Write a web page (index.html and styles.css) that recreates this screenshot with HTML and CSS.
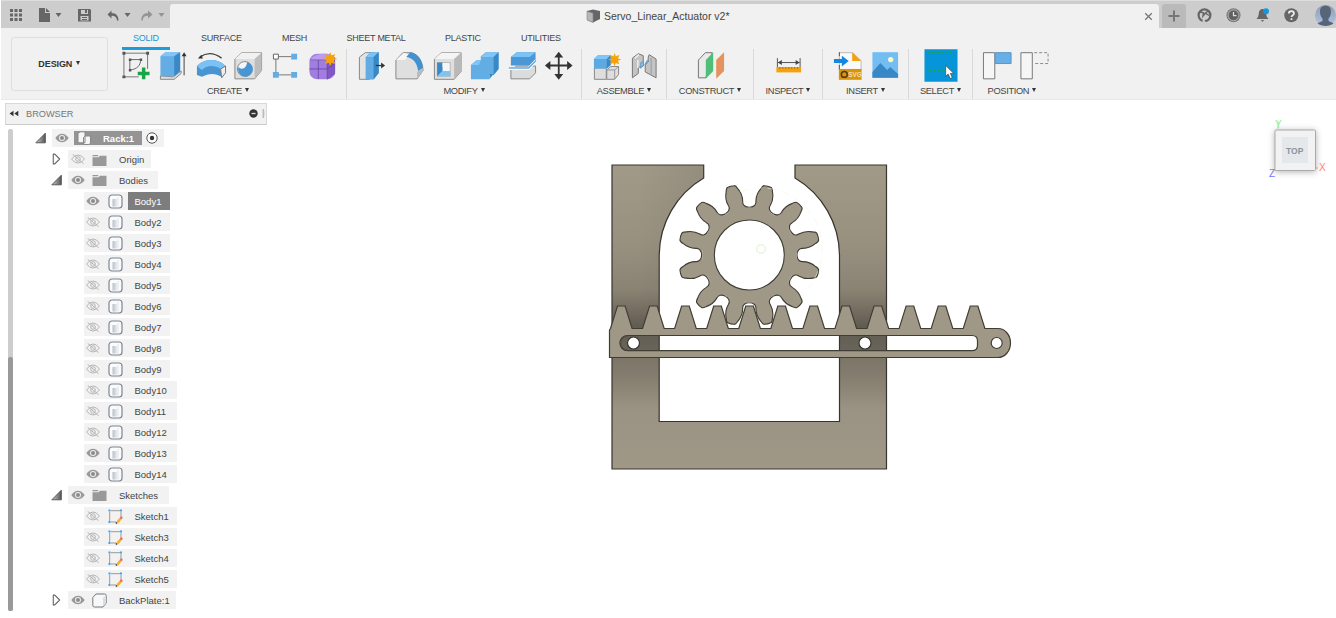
FILE: index.html
```html
<!DOCTYPE html>
<html lang="en">
<head>
<meta charset="utf-8">
<title>Servo_Linear_Actuator v2*</title>
<link rel="stylesheet" href="styles.css">
</head>
<body>
<svg class="defs" width="0" height="0" aria-hidden="true">
  <defs>
    <linearGradient id="g-col" x1="0" y1="165" x2="0" y2="469" gradientUnits="userSpaceOnUse">
      <stop offset="0" stop-color="#a19a89"/><stop offset=".25" stop-color="#999180"/><stop offset=".41" stop-color="#8a8374"/>
      <stop offset=".48" stop-color="#736d60"/><stop offset=".53" stop-color="#615c51"/><stop offset=".615" stop-color="#6a655a"/>
      <stop offset=".635" stop-color="#7b7568"/><stop offset=".72" stop-color="#898172"/><stop offset=".8" stop-color="#9a9282"/><stop offset="1" stop-color="#a09887"/>
    </linearGradient>
    <linearGradient id="g-shade"><stop offset="0" stop-color="#4a463c" stop-opacity="0"/><stop offset="1" stop-color="#4a463c" stop-opacity=".28"/></linearGradient>
    <linearGradient id="g-tri"><stop offset="0" stop-color="#ccc"/><stop offset="1" stop-color="#555"/></linearGradient>
    <linearGradient id="g-body"><stop offset="0" stop-color="#b9bfc8"/><stop offset="1" stop-color="#eef0f4"/></linearGradient>
    <linearGradient id="g-avatar" x1="0" y1="0" x2="0" y2="1"><stop offset="0" stop-color="#8b9cb5"/><stop offset="1" stop-color="#b1c5e2"/></linearGradient>
    <symbol id="eye" viewBox="0 0 14 10"><path d="M.3 5Q3.3.7 7 .7T13.7 5Q10.7 9.3 7 9.3T.3 5z" fill="#999"/><circle cx="7" cy="5" r="3" fill="#eee"/><circle cx="7" cy="5" r="2" fill="#8b8b8b"/></symbol>
    <symbol id="eye-off" viewBox="0 0 14 10"><path d="M.6 5Q3.3 1 7 1t6.4 4Q10.7 9 7 9T.6 5zM1.6.3l11 9.4" fill="none" stroke="#b5b5b5"/><circle cx="7" cy="5" r="2.3" fill="none" stroke="#b5b5b5"/></symbol>
    <symbol id="folder" viewBox="0 0 15 12"><path d="M.5.6h5.700v1.200H.5zM.5 2.700h6L8 1.300h6.500V11.500H.5z" fill="#999"/></symbol>
    <symbol id="body" viewBox="0 0 15 15"><rect x="1" y="1" width="13" height="13" rx="3" fill="#fafbfc" stroke="#7f8590" stroke-width="1.200"/><path d="M4.500 5h5v7.500h-5z" fill="url(#g-body)"/><path d="M10 3v9.500" stroke="#e2e4e8"/></symbol>
    <symbol id="sketch" viewBox="0 0 15 15"><path d="M1.700 3v9M3 1.700h9M13 3v5M3 13h5" fill="none" stroke="#999"/><path d="M.5.5h2v2h-2zM12 .5h2v2h-2zM.5 12h2v2h-2z" fill="#3fa0e8"/><path d="M9.300 13.300l3.500-4" stroke="#f8b02c" stroke-width="2.600"/><circle cx="13.300" cy="8.700" r="1.300" fill="#f2655b"/><circle cx="8.500" cy="14" r=".9" fill="#555"/></symbol>
    <symbol id="open" viewBox="0 0 11 11"><path d="M.8 10.300L10.300.7v9.600z" fill="url(#g-tri)" stroke="#4f4f4f" stroke-width=".9"/></symbol>
    <symbol id="shut" viewBox="0 0 11 13"><path d="M2 1.200h1.700L8.900 6.500 3.700 11.800H2z" fill="#fafafa" stroke="#666" stroke-width="1.200" stroke-linejoin="round"/></symbol>
    <symbol id="star" viewBox="-7 -7 14 14"><path d="M0-6.700L1.200-3.400 4.700-4.700 3.400-1.200 6.700 0 3.400 1.200 4.700 4.700 1.200 3.400 0 6.700-1.200 3.400-4.700 4.700-3.400 1.200-6.700 0-3.400-1.200-4.700-4.700-1.200-3.400z" fill="#f6a30b"/></symbol>
    <path id="tooth" d="M-12.35-46.070C-8.500-47.100-6.200-50.100-7.430-53.200-8.650-57.700-8.200-62.600-6-67-5.300-69.500-4.700-70.800-3.200-70.900Q0-71.500 3.200-70.900C4.700-70.800 5.300-69.500 6-67 8.200-62.600 8.650-57.700 7.430-53.200 6.200-50.100 8.500-47.100 12.350-46.070"/>
  </defs>
</svg>

<header class="titlebar">
  <div class="quick">
    <svg width="170" height="25" viewBox="0 3 170 25" fill="#666">
      <path d="M9 8h3v3H9zM13.500 8h3v3h-3zM18 8h3v3h-3zM9 12.500h3v3H9zM13.500 12.500h3v3h-3zM18 12.500h3v3h-3zM9 17h3v3H9zM13.500 17h3v3h-3zM18 17h3v3h-3z"/>
      <path d="M38 7h6v5h5v9H38zM45 7l4 4h-4z"/><path d="M54.500 12h6l-3 4z"/>
      <path fill-rule="evenodd" d="M77 8h12l1 1v11.500H77zM80 9v4h7V9zM79.500 15v4.500h8V15z"/><path d="M84 9h2v3h-2zM81 16h5v1h-5zM81 18h5v1h-5z"/>
      <path d="M110.500 9.500l-4 4 4 4v-2.700c3 0 5 .8 5.500 4.700h1.500c0-5-2.500-7.200-7-7.400z"/><path d="M123.500 12h6l-3 4z"/>
      <g opacity=".55"><path d="M147 9.500l4.500 4-4.500 4v-2.700c-3 0-4.800.8-5.300 4.700h-1.400c0-5 2.400-7.200 6.700-7.400z"/><path d="M157.500 12h6l-3 4z"/></g>
    </svg>
  </div>
  <div class="doc-tab">
    <svg width="15" height="14" viewBox="0 0 15 14"><path d="M7 .5L14 2v8l-7 3.500L1 11V2z" fill="#666"/><path d="M1 2.500l6 1.700v9L1 11z" fill="#b6b6b6"/><path d="M1 2l6 2.200v9.300L1 11z" fill="none" stroke="#888" stroke-width=".6"/></svg>
    <span>Servo_Linear_Actuator v2*</span>
    <svg class="close" width="9" height="9" viewBox="0 0 9 9"><path d="M1.200 1.200l6.600 6.600m0-6.600L1.200 7.800" stroke="#777" stroke-width="1.300"/></svg>
  </div>
  <div class="session">
    <span class="add"><svg width="12" height="12" viewBox="0 0 12 12"><path d="M6 .5v11M.5 6h11" stroke="#777" stroke-width="2"/></svg></span>
    <svg width="150" height="25" viewBox="1186 3 150 25">
      <circle cx="1204.500" cy="14.300" r="5.900" fill="none" stroke="#666" stroke-width="2.200"/><path d="M1199.500 10.500l4 1.500-.5 3 3-3.500 3-2M1206 12.500l3 2" stroke="#666" stroke-width="1.500" fill="none"/><path d="M1202 21.500l1.500-4 2.500 4z" fill="#cdcdcd"/>
      <circle cx="1233.500" cy="14.300" r="7" fill="#777"/><circle cx="1233.500" cy="14.300" r="5.500" fill="none" stroke="#bbb" stroke-width=".8"/><circle cx="1233.500" cy="14.300" r="4.500" fill="#606060"/><path d="M1233.500 11v3.700h3" fill="none" stroke="#ddd" stroke-width="1.300"/>
      <path d="M1256.500 18c2-2 2-3.500 2.300-6 .3-2.700 1.700-4 3.700-4s3.500 1.500 3.700 4c.2 2.500.3 4 2.300 6z" fill="#666"/><path d="M1261 19h3l-1.500 2z" fill="#666"/><circle cx="1266" cy="10.300" r="3" fill="#1398e0"/>
      <circle cx="1291.300" cy="14.300" r="7" fill="#666"/><path d="M1288.800 12.500c0-3.300 5.200-3.300 5.200 0 0 1.700-2.500 1.700-2.500 3.500m0 1.200v1.700" fill="none" stroke="#eee" stroke-width="1.700"/>
      <circle cx="1325.500" cy="14.500" r="10.500" fill="url(#g-avatar)"/><path d="M1320 10c0-7 11-7 11 0 0 4-1 6-2.500 7.500v2.500l5 2.300c-4 3.600-12 3.600-16 0l5-2.300v-2.500C1321 16 1320 14 1320 10z" fill="#566578"/>
    </svg>
  </div>
</header>

<section class="ribbon">
  <button class="workspace">DESIGN <i class="caret"></i></button>
  <div class="ribbon-main">
    <nav class="tabs"><a class="active t-solid">SOLID</a><a class="t-surface">SURFACE</a><a class="t-mesh">MESH</a><a class="t-sheet">SHEET METAL</a><a class="t-plastic">PLASTIC</a><a class="t-util">UTILITIES</a></nav>
    <div class="groups">
      <div class="group create">
        <div class="tools">
          <svg viewBox="116 48 38 36"><path d="M123 54v22M124 53h22M147 54v15M124 77h14" fill="none" stroke="#777" stroke-width="1"/><path d="M121.500 51.500h3v3h-3zM145.500 51.500h3v3h-3zM121.500 75.500h3v3h-3z" fill="#555"/><path d="M129 59.500h11c0 6-4 10-11 10.500z" fill="none" stroke="#666"/><path d="M128 58.500h2.500V61H128zM139 58.500h2.500V61H139zM128 69h2.500v2.500H128z" fill="#555"/><path d="M143 67.500v12M137 73.500h12" stroke="#18a548" stroke-width="3.500"/></svg>
          <svg viewBox="153.500 48 38 36"><path d="M160 76l13 1 8-6v2.500l-7 6h-14z" fill="#ddd" stroke="#888"/><path d="M160 56l5-4h15v19l-6 5.500h-14z" fill="#63ade5"/><path d="M160 56l5-4h15l-6 4z" fill="#81c4f6"/><path d="M174 56l6-4v19l-6 5.500z" fill="#3989c7"/><path d="M184 54.500v21" stroke="#444"/><path d="M181.500 56l2.500-4 2.500 4z" fill="#333"/></svg>
          <svg viewBox="191 48 38 36"><path d="M199 57c7-5 15-4 22 1" fill="none" stroke="#444" stroke-width="1.300"/><path d="M197 58.500l3.500-4 1.500 4z" fill="#333"/><path d="M196 66c8-8 21-8 29 0l-4 11c-6-4-13-4-20 0l-5-2z" fill="#4995d4"/><path d="M196 66c8-8 21-8 29 0l-5 3c-6-4-14-4-19 1z" fill="#7ac2f4"/><path d="M220 69l5-3v7l-4 5z" fill="#eee" stroke="#777"/></svg>
          <svg viewBox="228.500 48 38 36"><path d="M234.500 59l7-6.500h20v18l-7 8.500h-20z" fill="#dedede" stroke="#888"/><path d="M234.500 59l7-6.500h20l-7 6.500z" fill="#f1f1f1"/><path d="M254.500 59l7-6.500v18l-7 8.500z" fill="#bdbdbd"/><circle cx="244.500" cy="69" r="7.500" fill="#f5f5f5" stroke="#888"/><path d="M247 62a7.500 7.500 0 1 1-9 5c4 4 8 1 9-5z" fill="#4895d4"/></svg>
          <svg viewBox="266 48 38 36"><path d="M275 58v14M277 56.500h14M277 75h14" stroke="#777" fill="none"/><path d="M272.500 54h5v5h-5z" fill="#fff" stroke="#666"/><path d="M290.500 53.500h6v6h-6zM290.500 72h6v6h-6zM272 72h6v6h-6z" fill="#63ade5"/></svg>
          <svg viewBox="303.500 48 38 36"><rect x="309" y="53.500" width="26" height="26" rx="8" fill="#a07dde"/><path d="M311 58c5-5 15-6 22-2l-6 5h-17z" fill="#bd9cf0"/><path d="M327 61l8-4v17l-8 6z" fill="#8058c2"/><path d="M309 69h17l9-5M318 60v19M327 59v20M310 60h17l6-4" fill="none" stroke="#6948a8" stroke-width=".9"/><use href="#star" x="322.500" y="51.500" width="15" height="15"/></svg>
        </div>
        <div class="label">CREATE <i class="caret"></i></div>
      </div>
      <div class="group modify">
        <div class="tools">
          <svg viewBox="351 48 38 36"><path d="M357.500 57l6-4.500h8l-4 27h-10z" fill="#e3e3e3" stroke="#888"/><path d="M364 57l5-5h8v21l-5 6.500h-8z" fill="#4291d0"/><path d="M364 57l5-5h8l-5 5z" fill="#7bc3f5"/><path d="M364 57h8v22.500h-8z" fill="#62ace3"/><path d="M372 57l5-5v21l-5 6.500z" fill="#3988c6"/><path d="M374 65.500h6" stroke="#333" stroke-width="1.300"/><path d="M379.500 62.500l4 3-4 3z" fill="#333"/></svg>
          <svg viewBox="388.500 48 38 36"><path d="M394.500 60l7-7.500h7c7 0 13 7 13.500 18l-6 8.500h-21.500z" fill="#dfdfdf" stroke="#888"/><path d="M394.500 60l8-7.500 6 2-5 5.500z" fill="#f6f6f6"/><path d="M405 57l4-5c7 1 12 7 13 16l-5 3c-1-8-5-13-12-14z" fill="#4291d0"/><path d="M416 72l6-4v3l-6 8z" fill="#bbb"/></svg>
          <svg viewBox="426 48 38 36"><path d="M432.500 59l7-6.500h20v19l-7 8h-20z" fill="#dfdfdf" stroke="#888"/><path d="M432.500 59l7-6.500h20l-7 6.500z" fill="#f4f4f4"/><path d="M452.500 59l7-6.500v19l-7 8z" fill="#b9b9b9"/><path d="M435.500 62.500h13v14h-13z" fill="#f6f6f6" stroke="#999" stroke-width=".6"/><path d="M435.500 62.500l5 5V71l-5 5.500z" fill="#3989c8"/><path d="M435.500 62.500h5V71l-5 5.500z" fill="#3989c8"/><path d="M435.500 76.500l5-5.500h8v5.500z" fill="#7cc4f5"/></svg>
          <svg viewBox="463.500 48 38 36"><path d="M469.500 65l6-5h4v-4l5-4h13v17l-5 6h-4v4.500h-19z" fill="#63ade5"/><path d="M469.500 65l6-5h4l-2 5zM479.500 57l5-5h13l-5 5z" fill="#81c4f6"/><path d="M492.500 57l5-5v17l-5 6zM488.500 74h4l-4 5z" fill="#3989c7"/></svg>
          <svg viewBox="501 48 38 36"><path d="M509 70l6-4h19v7l-6 6h-19z" fill="#dcdcdc" stroke="#888"/><path d="M509 57l6-5h19v8l-6 5.500h-19z" fill="#4a98d7"/><path d="M509 57l6-5h19l-6 5z" fill="#7bc3f5"/><path d="M507 68.500h20l7.500-8" stroke="#fff" stroke-width="3" fill="none"/><path d="M507 68h20l7.500-7.500" stroke="#62ace3" stroke-width="1.500" fill="none"/></svg>
          <svg viewBox="539.500 48 38 36"><path d="M558.500 55v21M548 65.500h21" stroke="#333" stroke-width="1.800"/><path d="M554 57.500l4.500-6 4.500 6zM554 74l4.500 6 4.500-6zM550 61l-5.500 4.500 5.500 4.500zM567 61l5.500 4.500L567 70z" fill="#333"/></svg>
        </div>
        <div class="label">MODIFY <i class="caret"></i></div>
      </div>
      <div class="group assemble">
        <div class="tools">
          <svg viewBox="586 48 38 36"><path d="M592.500 68h12v11.500h-12zM605 70l4-3.500h8v8l-4 5h-8z" fill="#dedede" stroke="#888"/><path d="M605 70h8v9M613 70l4-3.500" stroke="#999" fill="none"/><path d="M592 59l4-4h13v10l-4 3.500h-13z" fill="#5da9e2"/><path d="M592 59l4-4h13l-4 4z" fill="#82c5f7"/><path d="M605 59l4-4v10l-4 3.500z" fill="#3a89c7"/><use href="#star" x="606" y="52.500" width="14" height="14"/></svg>
          <svg viewBox="624 48 38 36"><path d="M631.500 78V58l6-4.500 5 2V66l-3 1.500-2-1v7z" fill="#c4c4c4" stroke="#777"/><path d="M634 58l4-3.500M637 60v8" stroke="#eee" stroke-width="1.500"/><path d="M655.500 78V59l-7-4.500-1 2.500v5l-3 3v7z" fill="#c4c4c4" stroke="#777"/><path d="M640 68.500v-5l2-2M644 65l3-5" stroke="#4aa0e4" fill="none" stroke-width="1.200"/><path d="M650.500 58v16" stroke="#999"/></svg>
        </div>
        <div class="label">ASSEMBLE <i class="caret"></i></div>
      </div>
      <div class="group construct">
        <div class="tools"><svg viewBox="691 48 38 36"><path d="M697.500 60l7-7.500h7L705 78h-7.500z" fill="#eaeaea" stroke="#777"/><path d="M705 60l7.500-8v19l-7.500 8z" fill="#4fbe78"/><path d="M715.500 60l8-8v19l-8 8z" fill="#e3935f"/></svg></div>
        <div class="label">CONSTRUCT <i class="caret"></i></div>
      </div>
      <div class="group inspect">
        <div class="tools"><svg viewBox="769 48 38 36"><path d="M776.500 58v9M799.500 58v9M777 62.500h22" stroke="#555"/><path d="M777 62.500l4-2.500v5zM799 62.500l-4-2.500v5z" fill="#444"/><path d="M775.500 67h25v5.500h-25z" fill="#f4a20c"/><path d="M779 67v2m3-2v2m3-2v2m3-2v2m3-2v2m3-2v2m3-2v2" stroke="#a96c00" stroke-width=".8"/></svg></div>
        <div class="label">INSPECT <i class="caret"></i></div>
      </div>
      <div class="group insert">
        <div class="tools">
          <svg viewBox="828 48 38 36"><path d="M838.500 52.500H852l8.500 8V70h-22z" fill="#fafafa" stroke="#bbb"/><path d="M838.500 52v4m0 9v5" stroke="#555"/><path d="M851.500 52l9 9h-9z" fill="#f4a20c"/><path d="M838 69h23v11h-23z" fill="#d9940e"/><circle cx="843.500" cy="74.500" r="3" fill="none" stroke="#4b390f" stroke-width="1.500"/><text x="847.500" y="77.500" class="svg-word">SVG</text><path d="M833 59h8v-3.500l7 5.500-7 5.500V63h-8z" fill="#1487e0"/></svg>
          <svg viewBox="865.500 48 38 36"><path d="M871 52h26v26h-26z" fill="#73bdf2"/><path d="M871 72l8-9 7 7 3-3 8 7v4h-26z" fill="#3988c6"/><circle cx="889.500" cy="59.500" r="2.700" fill="#f8f9c8"/></svg>
        </div>
        <div class="label">INSERT <i class="caret"></i></div>
      </div>
      <div class="group select">
        <div class="tools"><svg viewBox="921 48 38 36"><path d="M923.500 49h33.500v33h-33.500z" fill="#0795da"/><path d="M926.500 52.500h24.500v18h-24.500z" fill="none" stroke="#1aa552" stroke-dasharray="3 1.500"/><path d="M945 65.500v11l2.500-2.300 2.200 4.500 2-1-2-4.200h3.500z" fill="#fff" stroke="#444" stroke-width=".7"/></svg></div>
        <div class="label">SELECT <i class="caret"></i></div>
      </div>
      <div class="group position">
        <div class="tools">
          <svg viewBox="978 48 38 36"><path d="M982.500 52.500h11.500v26.500h-11.500z" fill="#f6f6f6" stroke="#777"/><path d="M994.500 52.500h16v11h-16z" fill="#68afe7" stroke="#5596ca"/></svg>
          <svg viewBox="1015.500 48 38 36"><path d="M1020.500 52.500h11.500v26.500h-11.500z" fill="#f6f6f6" stroke="#777"/><path d="M1034 52.500h14v11h-14" fill="none" stroke="#888" stroke-dasharray="3 2"/></svg>
        </div>
        <div class="label">POSITION <i class="caret"></i></div>
      </div>
    </div>
  </div>
</section>

<main class="workarea">
  <aside class="browser">
    <div class="browser-head">
      <svg width="10" height="7" viewBox="0 0 10 7"><path d="M4.500.8v5.400L.5 3.500zM9.300.8v5.400l-4-2.700z" fill="#333"/></svg>
      <span>BROWSER</span>
      <svg class="end" width="16" height="11" viewBox="0 0 16 11"><circle cx="4.500" cy="5.500" r="4.200" fill="#333"/><path d="M2.500 5.500h4" stroke="#ddd" stroke-width="1.300"/><path d="M14.300 1v9" stroke="#bbb" stroke-width="1.500"/><path d="M15.500 3v5" stroke="#ddd"/></svg>
    </div>
    <div class="browser-body">
      <div class="scroll"><div class="thumb"></div></div>
      <div class="tree">
        <div class="row l0"><svg class="tw"><use href="#open"/></svg><div class="pill w112"><svg class="eye"><use href="#eye"/></svg><div class="rack"><svg width="17" height="14" viewBox="0 0 17 14"><path d="M2 2.500l2-1.700h5v11H2zM7.500 6.500l2-1.500h5v7l-1.500 1.500H7.500z" fill="#f4f5f7" stroke="#888"/></svg><b>Rack:1</b></div><svg class="radio" viewBox="0 0 12 12"><circle cx="6" cy="6" r="5.200" fill="#fff" stroke="#555"/><circle cx="6" cy="6" r="2.200" fill="#333"/></svg></div></div>
        <div class="row l1"><svg class="tw"><use href="#shut"/></svg><div class="pill w83"><svg class="eye"><use href="#eye-off"/></svg><svg class="ic"><use href="#folder" y="1"/></svg><span>Origin</span></div></div>
        <div class="row l1"><svg class="tw"><use href="#open"/></svg><div class="pill w90"><svg class="eye"><use href="#eye"/></svg><svg class="ic"><use href="#folder"/></svg><span>Bodies</span></div></div>
        <div class="row l2"><div class="pill w87"><svg class="eye"><use href="#eye"/></svg><svg class="ic"><use href="#body"/></svg><span class="picked">Body1</span></div></div>
        <div class="row l2"><div class="pill w87"><svg class="eye"><use href="#eye-off"/></svg><svg class="ic"><use href="#body"/></svg><span>Body2</span></div></div>
        <div class="row l2"><div class="pill w87"><svg class="eye"><use href="#eye-off"/></svg><svg class="ic"><use href="#body"/></svg><span>Body3</span></div></div>
        <div class="row l2"><div class="pill w87"><svg class="eye"><use href="#eye-off"/></svg><svg class="ic"><use href="#body"/></svg><span>Body4</span></div></div>
        <div class="row l2"><div class="pill w87"><svg class="eye"><use href="#eye-off"/></svg><svg class="ic"><use href="#body"/></svg><span>Body5</span></div></div>
        <div class="row l2"><div class="pill w87"><svg class="eye"><use href="#eye-off"/></svg><svg class="ic"><use href="#body"/></svg><span>Body6</span></div></div>
        <div class="row l2"><div class="pill w87"><svg class="eye"><use href="#eye-off"/></svg><svg class="ic"><use href="#body"/></svg><span>Body7</span></div></div>
        <div class="row l2"><div class="pill w87"><svg class="eye"><use href="#eye-off"/></svg><svg class="ic"><use href="#body"/></svg><span>Body8</span></div></div>
        <div class="row l2"><div class="pill w87"><svg class="eye"><use href="#eye-off"/></svg><svg class="ic"><use href="#body"/></svg><span>Body9</span></div></div>
        <div class="row l2"><div class="pill w93"><svg class="eye"><use href="#eye-off"/></svg><svg class="ic"><use href="#body"/></svg><span>Body10</span></div></div>
        <div class="row l2"><div class="pill w93"><svg class="eye"><use href="#eye-off"/></svg><svg class="ic"><use href="#body"/></svg><span>Body11</span></div></div>
        <div class="row l2"><div class="pill w93"><svg class="eye"><use href="#eye-off"/></svg><svg class="ic"><use href="#body"/></svg><span>Body12</span></div></div>
        <div class="row l2"><div class="pill w93"><svg class="eye"><use href="#eye"/></svg><svg class="ic"><use href="#body"/></svg><span>Body13</span></div></div>
        <div class="row l2"><div class="pill w93"><svg class="eye"><use href="#eye"/></svg><svg class="ic"><use href="#body"/></svg><span>Body14</span></div></div>
        <div class="row l1"><svg class="tw"><use href="#open"/></svg><div class="pill w101"><svg class="eye"><use href="#eye"/></svg><svg class="ic"><use href="#folder"/></svg><span>Sketches</span></div></div>
        <div class="row l2"><div class="pill w93"><svg class="eye"><use href="#eye-off"/></svg><svg class="ic"><use href="#sketch"/></svg><span>Sketch1</span></div></div>
        <div class="row l2"><div class="pill w93"><svg class="eye"><use href="#eye-off"/></svg><svg class="ic"><use href="#sketch"/></svg><span>Sketch3</span></div></div>
        <div class="row l2"><div class="pill w93"><svg class="eye"><use href="#eye-off"/></svg><svg class="ic"><use href="#sketch"/></svg><span>Sketch4</span></div></div>
        <div class="row l2"><div class="pill w93"><svg class="eye"><use href="#eye-off"/></svg><svg class="ic"><use href="#sketch"/></svg><span>Sketch5</span></div></div>
        <div class="row l1"><svg class="tw"><use href="#shut"/></svg><div class="pill w108"><svg class="eye"><use href="#eye"/></svg><svg class="ic" viewBox="0 0 15 15"><path d="M.8 4.500L4 1h8.500q1.700 0 1.700 1.700V10L11 14H2.500Q.8 14 .8 12.300z" fill="#f7f8fa" stroke="#777"/><path d="M11 5l3-3v8l-3 3.500z" fill="#ddd"/></svg><span>BackPlate:1</span></div></div>
      </div>
    </div>
  </aside>
  <svg class="canvas" width="1069" height="518" viewBox="267 100 1069 518">
    <g stroke="#38352e" stroke-width="1.200">
      <path d="M612 165H703.700V178A90.300 90.300 0 0 0 659.200 255V421.500H839.500V255A90.300 90.300 0 0 0 795 178V165H886.500V469H612z" fill="url(#g-col)"/>
      <path d="M636 165H703.700V178A90.300 90.300 0 0 0 659.200 255V330H636z" fill="url(#g-shade)" stroke="none" opacity=".5"/>
      <circle cx="633.500" cy="343" r="6" fill="#fff"/><circle cx="865" cy="343" r="6" fill="#fff"/>
    </g>
    <g transform="translate(749.300 255)" fill="#a09887" stroke="#3f3c34" stroke-width="1.100">
      <g>
        <use href="#tooth" transform="rotate(15)"/><use href="#tooth" transform="rotate(45)"/><use href="#tooth" transform="rotate(75)"/><use href="#tooth" transform="rotate(105)"/>
        <use href="#tooth" transform="rotate(135)"/><use href="#tooth" transform="rotate(165)"/><use href="#tooth" transform="rotate(195)"/><use href="#tooth" transform="rotate(225)"/>
        <use href="#tooth" transform="rotate(255)"/><use href="#tooth" transform="rotate(285)"/><use href="#tooth" transform="rotate(315)"/><use href="#tooth" transform="rotate(345)"/>
      </g>
      <circle r="47.200" stroke="none"/><circle r="35" fill="#fff"/>
    </g>
    <g fill="none"><circle cx="761" cy="249" r="4.300" stroke="#eaf3df" stroke-width="1.500"/><path d="M740 191.700A61 61 0 0 1 808 288" stroke="#eef5e2" stroke-opacity=".5" stroke-dasharray="9 5"/></g>
    <path d="M609.500 357.500V330L610.500 328.500l7-22.500h7.600l7 22.500h10.470l7-22.500h7.600l7 22.500h10.470l7-22.500h7.600l7 22.500h10.470l7-22.500h7.600l7 22.500h10.470l7-22.500h7.600l7 22.500h10.470l7-22.500h7.600l7 22.500h10.470l7-22.500h7.600l7 22.500h10.470l7-22.500h7.600l7 22.500h10.470l7-22.500h7.600l7 22.500h10.470l7-22.500h7.600l7 22.500h10.470l7-22.500h7.600l7 22.500h10.470l7-22.500h7.600l7 22.500H998a12.500 14.500 0 0 1 0 29zM627.500 335.500a7.600 7.600 0 0 0 0 15.200H972q5.500 0 5.500-5.500v-4.200q0-5.500-5.500-5.500zM1002.200 343a5.500 5.500 0 1 0-11 0 5.500 5.500 0 1 0 11 0z" fill="#a09887" fill-rule="evenodd" stroke="#403d35" stroke-width="1.200"/>
    <path d="M627.500 336.300a6.800 6.800 0 0 0 0 13.600" fill="none" stroke="#514d43"/>
    <g class="cube">
      <path d="M1278 120.500v9" stroke="#b7f7b7"/>
      <rect x="1275" y="130" width="40.500" height="40.500" rx="1" class="cube-face"/>
      <path d="M1282 137h26v26h-26z" fill="#e5e8eb"/>
      <text x="1286" y="154" class="cube-top">TOP</text>
      <text x="1275" y="128" class="axis y">Y</text><text x="1269" y="177" class="axis z">Z</text><text x="1319" y="171" class="axis x">X</text>
      <path d="M1315.500 168h2.500" stroke="#f88"/>
    </g>
  </svg>
</main>
</body>
</html>
```
FILE: styles.css
```css
* { box-sizing: border-box; }
body { margin: 0; width: 1336px; height: 618px; overflow: hidden; background: #fff; color: #444; font: 9.5px "Liberation Sans", Arial, sans-serif; }
svg { display: block; flex: none; }
.defs { position: absolute; }

.titlebar { display: flex; height: 28px; margin-left: 1px; padding-top: 3px; background: #cdcdcd; border-top: 1px solid #ddd; }
.quick { width: 169px; }
.doc-tab { display: flex; align-items: center; flex: 1; gap: 3px; padding: 0 6px 0 416px; background: #f1f1f1; border-radius: 3px 3px 0 0; font-size: 10.5px; color: #444; }
.doc-tab span { white-space: nowrap; }
.close { margin-left: auto; }
.session { display: flex; width: 177px; padding-left: 3px; }
.add { display: flex; align-items: center; justify-content: center; width: 25px; background: #bababa; border-radius: 3px 3px 0 0; }

.ribbon { display: flex; height: 72px; margin-left: 1px; background: #f1f1f1; border-bottom: 1px solid #e9e9e9; }
.workspace { width: 97px; height: 54px; margin: 9px 2px 0 10px; padding: 0 1px 0 0; border: 1px solid #dedede; border-radius: 3px; background: #f1f1f1; color: #333; font: bold 9px "Liberation Sans", Arial, sans-serif; letter-spacing: -.1px; }
.caret { display: inline-block; margin-left: 1px; border: 2.5px solid transparent; border-top: 4px solid #333; border-bottom: 0; vertical-align: 2px; }
.ribbon-main { display: flex; flex-direction: column; }
.tabs { display: flex; height: 21px; padding-left: 12px; }
.tabs a { height: 22px; padding-top: 5px; text-align: center; font-size: 9px; letter-spacing: -.25px; white-space: nowrap; }
.tabs .active { color: #1898d5; border-bottom: 3px solid #1b9ddb; }
.t-solid { width: 48px; }
.t-surface { width: 41px; margin: 0 40px 0 31px; }
.t-mesh { width: 25px; }
.t-sheet { width: 60px; margin: 0 38px 0 39px; }
.t-plastic { width: 38px; }
.t-util { width: 39px; margin-left: 39px; }
.groups { display: flex; }
.group { height: 50px; border-right: 1px solid #d9d9d9; }
.tools { display: flex; justify-content: center; height: 35px; padding-left: 2px; }
.tools svg { width: 37.5px; height: 36px; margin-top: -1px; }
.label { text-align: center; height: 15px; line-height: 15px; font-size: 9.3px; letter-spacing: -.35px; white-space: nowrap; }
.create { width: 237px; }
.modify { width: 235px; }
.assemble { width: 85px; }
.construct { width: 87px; }
.inspect { width: 69px; }
.insert { width: 86px; }
.select { width: 64px; }
.position { width: 78px; border: 0; }
.position .tools { width: 84px; }
.select .tools { padding-left: 0; }
.svg-word { font: bold 6.5px "Liberation Sans", Arial, sans-serif; fill: #f7deb0; }

.workarea { display: flex; height: 518px; }
.browser { width: 267px; padding: 3px 0 0 5px; }
.browser-head { display: flex; align-items: center; gap: 7px; height: 22px; padding: 0 0 1px 3px; background: #f1f1f1; border: 1px solid #d8d8d8; border-bottom-color: #ccc; color: #777; font-size: 9.2px; }
.end { margin-left: auto; margin-right: 1px; }
.browser-body { display: flex; padding: 4px 0 0 3px; }
.scroll { width: 5px; height: 482px; padding-top: 228px; background: #cdcdcd; border-radius: 2px; }
.thumb { height: 254px; background: #999; border-radius: 2px; }
.tree { display: flex; flex-direction: column; gap: 3px; padding-left: 22px; }
.row { display: flex; align-items: center; height: 18px; }
.l1 { padding-left: 16px; }
.l2 { padding-left: 49px; }
.tw { width: 11px; height: 12px; margin-right: 6px; }
.pill { display: flex; align-items: center; height: 18px; padding-left: 3px; background: #f2f2f2; }
.eye { width: 14px; height: 10px; }
.ic { width: 15px; height: 15px; margin: 0 12px 0 7px; }
.pill span { white-space: nowrap; }
.l2 .eye { margin-left: -1px; }
.l2 .ic { margin: 0 11.5px 0 8px; }
.rack { display: flex; align-items: center; gap: 10px; width: 68px; height: 14px; margin: 0 4px 0 5px; padding-left: 2px; background: #949494; color: #fff; }
.rack b { font-size: 9.5px; }
.radio { width: 12px; height: 12px; }
.pill .picked { align-self: stretch; flex: 1; margin-left: -7px; padding-left: 7px; line-height: 19px; background: #7d7d7d; color: #fff; }
.w112 { width: 112px; } .w83 { width: 83px; } .w90 { width: 90px; } .w87 { width: 86px; }
.w93 { width: 93px; } .w101 { width: 101px; } .w108 { width: 108px; }

.cube-face { fill: #f2f2f2; stroke: #aaa; filter: drop-shadow(0 1px 3px rgba(0, 0, 0, .3)); }
.cube-top { font: bold 8.5px "Liberation Sans", Arial, sans-serif; fill: #8a939b; }
.axis { font: 10px "Liberation Sans", Arial, sans-serif; }
.y { fill: #8cf08c; } .z { fill: #7474ff; } .x { fill: #ff8080; }
```
